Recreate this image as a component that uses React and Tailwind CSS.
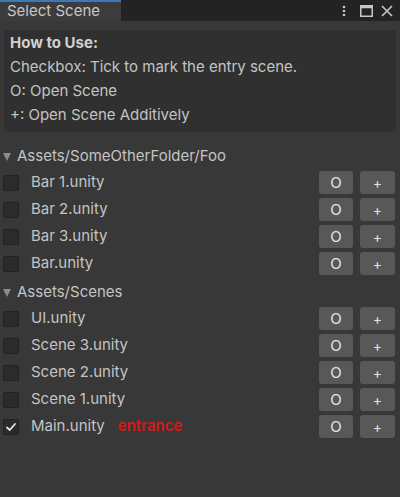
import React from 'react';

const groups = [
  {
    path: 'Assets/SomeOtherFolder/Foo',
    scenes: [
      { name: 'Bar 1.unity' },
      { name: 'Bar 2.unity' },
      { name: 'Bar 3.unity' },
      { name: 'Bar.unity' },
    ],
  },
  {
    path: 'Assets/Scenes',
    scenes: [
      { name: 'UI.unity' },
      { name: 'Scene 3.unity' },
      { name: 'Scene 2.unity' },
      { name: 'Scene 1.unity' },
      { name: 'Main.unity', entry: true },
    ],
  },
];

function Checkbox({ checked }) {
  return (
    <div className="w-[16px] h-[16px] rounded-[2px] bg-[#2b2b2b] border border-[#222] flex items-center justify-center">
      {checked && (
        <svg width="12" height="12" viewBox="0 0 12 12">
          <path d="M2 6.5 L4.8 9 L10 3" fill="none" stroke="#e6e6e6" strokeWidth="1.8" strokeLinecap="round" strokeLinejoin="round" />
        </svg>
      )}
    </div>
  );
}

function SceneRow({ scene }) {
  return (
    <div className="h-[27px] flex items-center pl-[3px] pr-[5px]">
      <Checkbox checked={scene.entry} />
      <span className="ml-[12px] text-[#c4c4c4]">{scene.name}</span>
      {scene.entry && <span className="ml-[13px] text-[#d01c1c] font-semibold">entrance</span>}
      <div className="ml-auto flex gap-[7px]">
        <button className="w-[34px] h-[23px] rounded-[3px] bg-[#585858] text-[#e4e4e4] text-[15px] leading-none">O</button>
        <button className="w-[35px] h-[23px] rounded-[3px] bg-[#585858] text-[#e4e4e4] text-[14px] leading-none">+</button>
      </div>
    </div>
  );
}

export default function App() {
  return (
    <div className="w-[400px] h-[497px] bg-[#383838] text-[15px] font-['Inter',sans-serif] flex flex-col">
      {/* Title bar */}
      <div className="h-[21px] flex bg-[#232323]">
        <div className="w-[121px] bg-[#3c3c3c] border-t-2 border-[#3a79bb] text-[#c8c8c8] pl-[7px] leading-[18px]">
          Select Scene
        </div>
        <div className="ml-auto flex items-center gap-[8px] pr-[7px]">
          <svg width="4" height="12" viewBox="0 0 4 12">
            <circle cx="2" cy="2" r="1.3" fill="#c8c8c8" />
            <circle cx="2" cy="6" r="1.3" fill="#c8c8c8" />
            <circle cx="2" cy="10" r="1.3" fill="#c8c8c8" />
          </svg>
          <svg width="13" height="12" viewBox="0 0 13 12" className="ml-[6px]">
            <rect x="0.75" y="0.75" width="11.5" height="10.5" fill="none" stroke="#c8c8c8" strokeWidth="1.5" />
            <rect x="0.75" y="0.75" width="11.5" height="2.5" fill="#c8c8c8" />
          </svg>
          <svg width="12" height="12" viewBox="0 0 12 12">
            <path d="M1 1 L11 11 M11 1 L1 11" stroke="#c8c8c8" strokeWidth="1.6" />
          </svg>
        </div>
      </div>

      {/* Help box */}
      <div className="mx-[4px] mt-[9px] h-[102px] bg-[#303030] px-[6px] pt-[1px] text-[#c4c4c4] leading-[24px]">
        <div className="font-bold text-[#d0d0d0]">How to Use:</div>
        <div>Checkbox: Tick to mark the entry scene.</div>
        <div>O: Open Scene</div>
        <div>+: Open Scene Additively</div>
      </div>

      <div className="mt-[11px] flex flex-col gap-[2px]">
        {groups.map((g) => (
          <div key={g.path}>
            <div className="h-[26px] flex items-center pl-[3px] text-[#c4c4c4]">
              <svg width="8" height="9" viewBox="0 0 8 9">
                <path d="M0 1 L8 1 L4 9 Z" fill="#8c8c8c" />
              </svg>
              <span className="ml-[6px]">{g.path}</span>
            </div>
            {g.scenes.map((s) => (
              <SceneRow key={s.name} scene={s} />
            ))}
          </div>
        ))}
      </div>
    </div>
  );
}
